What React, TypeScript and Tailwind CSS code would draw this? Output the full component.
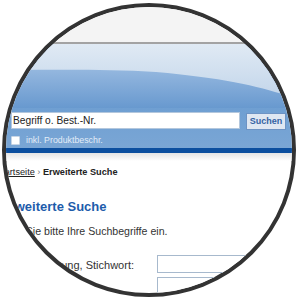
import React from 'react';

const font = { fontFamily: '"Liberation Sans", Arial, sans-serif' };

const HeaderWave: React.FC = () => (
  <svg width="288" height="64" viewBox="0 0 288 64" className="block">
    <defs>
      <linearGradient id="deep" x1="0" y1="0" x2="0" y2="1">
        <stop offset="0" stopColor="#b2cce8" />
        <stop offset="0.5" stopColor="#8db2dc" />
        <stop offset="1" stopColor="#6899cf" />
      </linearGradient>
      <linearGradient id="light" x1="0" y1="0" x2="0" y2="1">
        <stop offset="0" stopColor="#e0eaf4" />
        <stop offset="1" stopColor="#c2d5ea" />
      </linearGradient>
    </defs>
    <rect width="288" height="64" fill="url(#deep)" />
    <path d="M0 0 H288 V54 C260 44 220 34 150 28 C100 25 50 26 0 26 Z" fill="url(#light)" />
  </svg>
);

const App: React.FC = () => {
  return (
    <div className="w-[300px] h-[300px] bg-white pt-[3px] pl-[2px]" style={font}>
      <div className="w-[294px] h-[294px] rounded-full border-[4px] border-[#333333] overflow-hidden bg-white">
        {/* top strip */}
        <div className="h-[35px] bg-[#f4f4f4]" />
        <div className="h-[2px] bg-[#a3a3a3]" />
        <HeaderWave />

        {/* search band */}
        <div className="h-[40px] bg-gradient-to-b from-[#6f9fd2] to-[#7aa6d5] pt-[4px]">
          <div className="flex items-start">
            <div className="ml-[5px] w-[229px] h-[17px] bg-white border border-[#b3c7dd] flex items-center pl-[1px] text-[10.2px] text-[#222]">
              Begriff o. Best.-Nr.
            </div>
            <button className="ml-[6px] mt-[1px] w-[40px] h-[17px] bg-[#dfe7f2] border border-[#6d93c4] text-[9px] font-bold text-[#3462a3] flex items-center justify-center">
              Suchen
            </button>
          </div>
          <div className="flex items-center mt-[6px] ml-[5px]">
            <div className="w-[9px] h-[9px] bg-white border border-[#c8d6e6] rounded-[1px]" />
            <span className="ml-[6px] text-[8.8px] text-[#e3edf8] leading-none">inkl. Produktbeschr.</span>
          </div>
        </div>
        <div className="h-[5px] bg-[#0c4f9f]" />
        <div className="h-[8px] bg-gradient-to-b from-[#e4e4e4] to-white" />

        {/* content */}
        <div className="mt-[5px] ml-[-10px] text-[9.2px] leading-[12px] text-[#222] whitespace-nowrap">
          <span className="underline">Startseite</span>
          <span className="text-[#777]"> › </span>
          <span className="font-bold">Erweiterte Suche</span>
        </div>
        <div className="mt-[21px] ml-[-5px] text-[13px] leading-[16px] font-bold text-[#1d5cab] whitespace-nowrap">
          Erweiterte Suche
        </div>
        <div className="mt-[10px] ml-[-15px] text-[10.6px] leading-[13px] text-[#333] whitespace-nowrap">
          Geben Sie bitte Ihre Suchbegriffe ein.
        </div>
        <div className="mt-[17px] flex items-center">
          <div className="w-[128px] shrink-0 text-right text-[11px] leading-[14px] mt-[2px] text-[#333] whitespace-nowrap">Bezeichnung, Stichwort:</div>
          <div className="ml-[23px] w-[140px] h-[18px] border border-[#a7b9cd] bg-white shrink-0" />
        </div>
        <div className="mt-[4px] ml-[151px] w-[140px] h-[18px] border border-[#a7b9cd] bg-white" />
      </div>
    </div>
  );
};

export default App;
